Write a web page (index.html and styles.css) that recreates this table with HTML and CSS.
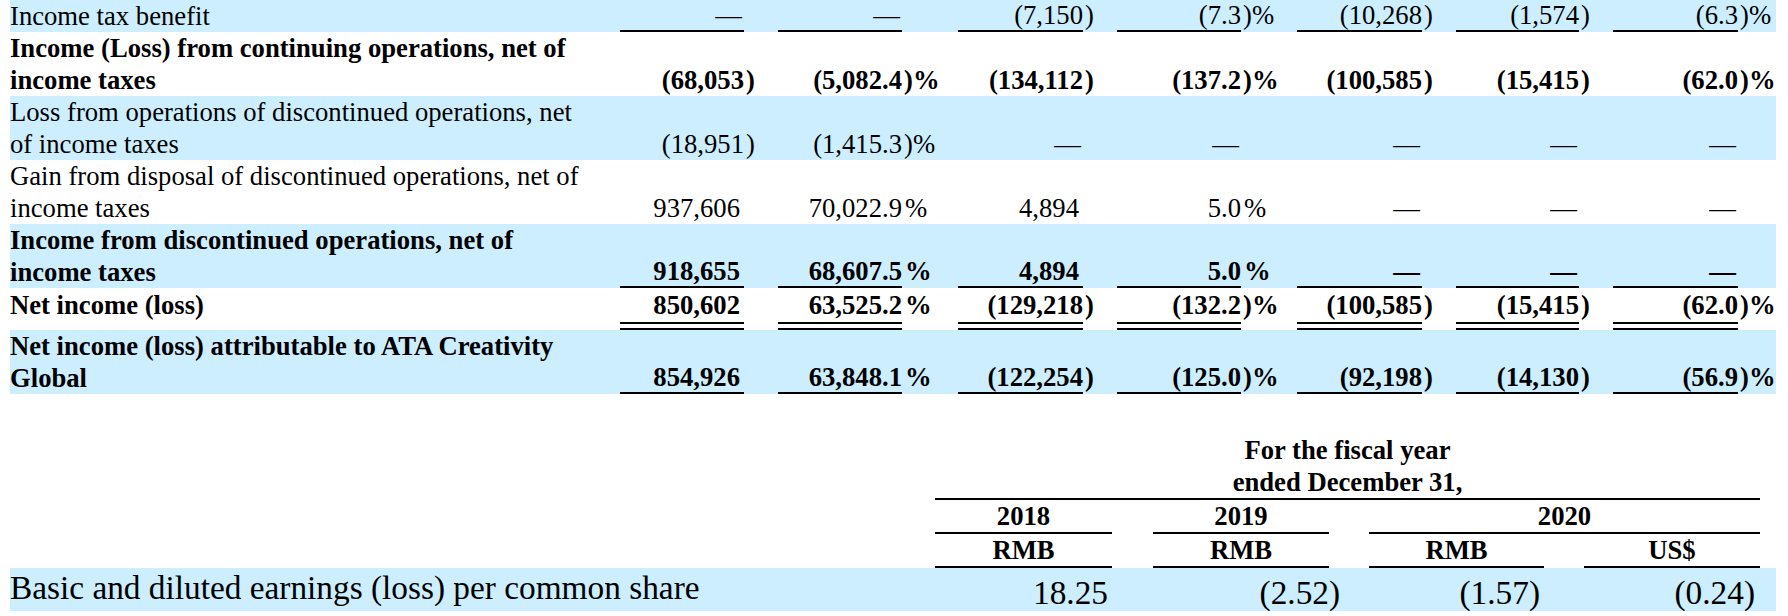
FILE: index.html
```html
<!DOCTYPE html>
<html lang="en">
<head>
<meta charset="utf-8">
<title>Consolidated statements of operations</title>
<link rel="stylesheet" href="styles.css">
</head>
<body>
<div class="page">
  <div class="fin">
    <div class="fin-row blue u">
      <div class="lbl">Income tax benefit</div>
      <div class="num dash">—</div><div class="sfx"></div>
      <div class="num dash">—</div><div class="sfx"></div>
      <div class="num">(7,150</div><div class="sfx">)</div>
      <div class="num">(7.3</div><div class="sfx">)%</div>
      <div class="num">(10,268</div><div class="sfx">)</div>
      <div class="num">(1,574</div><div class="sfx">)</div>
      <div class="num">(6.3</div><div class="sfx">)%</div>
    </div>
    <div class="fin-row bold">
      <div class="lbl">Income (Loss) from continuing operations, net of income taxes</div>
      <div class="num">(68,053</div><div class="sfx">)</div>
      <div class="num">(5,082.4</div><div class="sfx">)%</div>
      <div class="num">(134,112</div><div class="sfx">)</div>
      <div class="num">(137.2</div><div class="sfx">)%</div>
      <div class="num">(100,585</div><div class="sfx">)</div>
      <div class="num">(15,415</div><div class="sfx">)</div>
      <div class="num">(62.0</div><div class="sfx">)%</div>
    </div>
    <div class="fin-row blue">
      <div class="lbl">Loss from operations of discontinued operations, net of income taxes</div>
      <div class="num">(18,951</div><div class="sfx">)</div>
      <div class="num">(1,415.3</div><div class="sfx">)%</div>
      <div class="num dash">—</div><div class="sfx"></div>
      <div class="num dash">—</div><div class="sfx"></div>
      <div class="num dash">—</div><div class="sfx"></div>
      <div class="num dash">—</div><div class="sfx"></div>
      <div class="num dash">—</div><div class="sfx"></div>
    </div>
    <div class="fin-row">
      <div class="lbl">Gain from disposal of discontinued operations, net of income taxes</div>
      <div class="num pos">937,606</div><div class="sfx"></div>
      <div class="num">70,022.9</div><div class="sfx pc">%</div>
      <div class="num pos">4,894</div><div class="sfx"></div>
      <div class="num">5.0</div><div class="sfx pc">%</div>
      <div class="num dash">—</div><div class="sfx"></div>
      <div class="num dash">—</div><div class="sfx"></div>
      <div class="num dash">—</div><div class="sfx"></div>
    </div>
    <div class="fin-row blue bold u">
      <div class="lbl">Income from discontinued operations, net of income taxes</div>
      <div class="num pos">918,655</div><div class="sfx"></div>
      <div class="num">68,607.5</div><div class="sfx pc">%</div>
      <div class="num pos">4,894</div><div class="sfx"></div>
      <div class="num">5.0</div><div class="sfx pc">%</div>
      <div class="num dash">—</div><div class="sfx"></div>
      <div class="num dash">—</div><div class="sfx"></div>
      <div class="num dash">—</div><div class="sfx"></div>
    </div>
    <div class="fin-row bold d">
      <div class="lbl">Net income (loss)</div>
      <div class="num pos">850,602</div><div class="sfx"></div>
      <div class="num">63,525.2</div><div class="sfx pc">%</div>
      <div class="num">(129,218</div><div class="sfx">)</div>
      <div class="num">(132.2</div><div class="sfx">)%</div>
      <div class="num">(100,585</div><div class="sfx">)</div>
      <div class="num">(15,415</div><div class="sfx">)</div>
      <div class="num">(62.0</div><div class="sfx">)%</div>
    </div>
    <div class="fin-row blue bold u">
      <div class="lbl">Net income (loss) attributable to ATA Creativity Global</div>
      <div class="num pos">854,926</div><div class="sfx"></div>
      <div class="num">63,848.1</div><div class="sfx pc">%</div>
      <div class="num">(122,254</div><div class="sfx">)</div>
      <div class="num">(125.0</div><div class="sfx">)%</div>
      <div class="num">(92,198</div><div class="sfx">)</div>
      <div class="num">(14,130</div><div class="sfx">)</div>
      <div class="num">(56.9</div><div class="sfx">)%</div>
    </div>
  </div>

  <div class="eps">
    <div class="eps-row eps-head">
      <div class="period">For the fiscal year<br>ended December 31,</div>
    </div>
    <div class="eps-row eps-head">
      <div class="hc c1">2018</div>
      <div class="hc c2">2019</div>
      <div class="hc c34">2020</div>
    </div>
    <div class="eps-row eps-head">
      <div class="hc c1">RMB</div>
      <div class="hc c2">RMB</div>
      <div class="hc c3">RMB</div>
      <div class="hc c4">US$</div>
    </div>
    <div class="eps-row eps-data">
      <div class="elbl">Basic and diluted earnings (loss) per common share</div>
      <div class="ev c1 p4">18.25</div>
      <div class="ev c2">(2.52</div>
      <div class="es g2">)</div>
      <div class="ev c3 p4">(1.57)</div>
      <div class="ev c4 p5">(0.24)</div>
    </div>
  </div>
</div>
</body>
</html>
```

FILE: styles.css
```css
* {
  box-sizing: border-box;
  margin: 0;
  padding: 0;
}

html,
body {
  background: #ffffff;
}

body {
  font-family: "Liberation Serif", "Times New Roman", serif;
  font-size: 26.67px;
  color: #000000;
}

.page {
  width: 1776px;
  padding-left: 10px;
}

/* ---------- main statement table ---------- */

.fin-row {
  display: grid;
  grid-template-columns: 610px 124px 34px 124px 56px 125px 34px 124px 56px 125px 34px 123px 34px 125px 38px;
  align-items: end;
  line-height: 32px;
}

.blue {
  background: #cceeff;
}

.bold {
  font-weight: bold;
}

.lbl {
  align-self: start;
  padding-right: 30px;
}

.num {
  text-align: right;
  white-space: nowrap;
}

.sfx {
  text-align: left;
  white-space: nowrap;
  padding-left: 2px;
}

.pos {
  padding-right: 4px;
}

.dash {
  padding-right: 2px;
}

.sfx.pc {
  padding-left: 3px;
}

/* single underline rows */
.u .num,
.u .sfx {
  line-height: 30px;
}

.u .num {
  border-bottom: 2px solid #000000;
}

.u .sfx {
  padding-bottom: 2px;
}

/* double underline row */
.d > * {
  line-height: 34px;
}

.d .num {
  padding-bottom: 8px;
  background:
    linear-gradient(#000000, #000000) left bottom / 100% 2px no-repeat,
    linear-gradient(#000000, #000000) left calc(100% - 6px) / 100% 2px no-repeat;
}

.d .sfx {
  padding-bottom: 8px;
}

/* ---------- per share table ---------- */

.eps {
  margin-top: 40px;
}

.eps-row {
  display: grid;
  grid-template-columns: 925px 177px 41px 176px 40px 175px 40px 176px 16px;
  line-height: 32px;
}

.eps-head {
  font-weight: bold;
  text-align: center;
}

.period {
  grid-column: 2 / 9;
  border-bottom: 2px solid #000000;
}

.hc {
  border-bottom: 2px solid #000000;
}

.c1 { grid-column: 2; }
.c2 { grid-column: 4; }
.g2 { grid-column: 5; }
.c3 { grid-column: 6; }
.c4 { grid-column: 8; }
.c34 { grid-column: 6 / 9; }

.eps-data {
  background: #cceeff;
  grid-template-rows: 43px;
  font-size: 33.33px;
}

.elbl {
  grid-column: 1;
  align-self: start;
  line-height: 40px;
  white-space: nowrap;
}

.ev,
.es {
  grid-row: 1;
  align-self: end;
  line-height: 36px;
  white-space: nowrap;
}

.ev {
  text-align: right;
}

.es {
  text-align: left;
}

.p4 {
  padding-right: 4px;
}

.p5 {
  padding-right: 5px;
}
```
